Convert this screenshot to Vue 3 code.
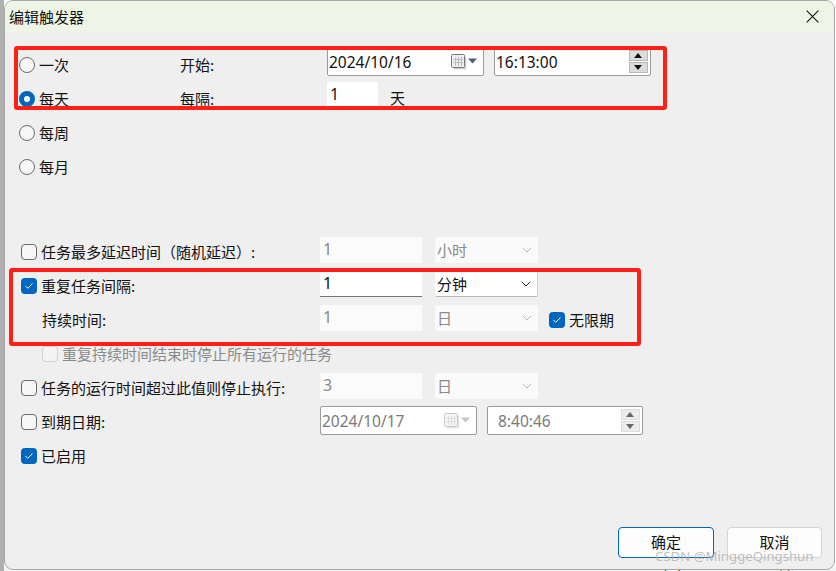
<script setup>
const freq = [
  { label: '一次', on: false },
  { label: '每天', on: true },
  { label: '每周', on: false },
  { label: '每月', on: false },
]
</script>

<template>
  <div class="screen">
    <div class="behind">
      <span class="behind-a">确定</span>
      <span class="behind-b">取消</span>
    </div>
    <div class="dialog">
      <header class="title">
        <span>编辑触发器</span>
        <svg class="close" width="13" height="13" viewBox="0 0 13 13"><path d="M.7.7L12.3 12.3M12.3.7L.7 12.3" stroke="#111" stroke-width="1.1" fill="none" /></svg>
      </header>

      <section class="top">
        <div class="row" v-for="(f, i) in freq" :key="f.label">
          <span class="radio" :class="{ on: f.on }"></span>
          <span class="freq-label">{{ f.label }}</span>

          <template v-if="i === 0">
            <span class="mid-label">开始:</span>
            <div class="box date">
              <span>2024/10/16</span>
              <svg class="cal" width="26" height="17" viewBox="0 0 26 17">
                <path d="M3 15.5h11.5V4" stroke="#c9c9c9" stroke-width="1.5" fill="none" />
                <rect x=".5" y="1.5" width="13" height="13" rx="1" fill="#eeeef0" stroke="#77777c" />
                <path d="M4.5 4v9M7.5 4v9M10.5 4v9M2.5 6.5h9.500M2.500 9.500h9.500" stroke="#bcbcc4" fill="none" />
                <path d="M17 5.500h9l-4.500 5z" fill="#4f5c80" />
              </svg>
            </div>
            <div class="box time">
              <span>16:13:00</span>
              <div class="spin">
                <span class="up"></span>
                <span class="down"></span>
              </div>
            </div>
          </template>

          <template v-if="i === 1">
            <span class="mid-label">每隔:</span>
            <div class="every">1</div>
            <span class="unit">天</span>
          </template>
        </div>
      </section>

      <section class="bottom">
        <div class="row">
          <span class="check"></span>
          <span class="opt-label">任务最多延迟时间（随机延迟）:</span>
          <div class="num off">1</div>
          <div class="pick off">小时<svg width="10" height="6" viewBox="0 0 10 6"><path d="M.8.8L5 5l4.200-4.200" stroke="#b5b5b5" fill="none" /></svg></div>
        </div>
        <div class="row">
          <span class="check on"><svg width="10" height="8" viewBox="0 0 10 8"><path d="M1.500 4l2.300 2.300L8.500 1.500" stroke="#fff" fill="none" /></svg></span>
          <span class="opt-label">重复任务间隔:</span>
          <div class="num active">1</div>
          <div class="pick active">分钟<svg width="10" height="6" viewBox="0 0 10 6"><path d="M.8.8L5 5l4.200-4.200" stroke="#333" fill="none" /></svg></div>
        </div>
        <div class="row">
          <span class="check ghost"></span>
          <span class="opt-label indent">持续时间:</span>
          <div class="num off">1</div>
          <div class="pick off">日<svg width="10" height="6" viewBox="0 0 10 6"><path d="M.8.8L5 5l4.200-4.200" stroke="#b5b5b5" fill="none" /></svg></div>
          <span class="check on forever"><svg width="10" height="8" viewBox="0 0 10 8"><path d="M1.500 4l2.300 2.300L8.500 1.500" stroke="#fff" fill="none" /></svg></span>
          <span class="forever-label">无限期</span>
        </div>
        <div class="row sub">
          <span class="check disabled"></span>
          <span class="sub-label">重复持续时间结束时停止所有运行的任务</span>
        </div>
        <div class="row">
          <span class="check"></span>
          <span class="opt-label">任务的运行时间超过此值则停止执行:</span>
          <div class="num off">3</div>
          <div class="pick off">日<svg width="10" height="6" viewBox="0 0 10 6"><path d="M.8.8L5 5l4.200-4.200" stroke="#b5b5b5" fill="none" /></svg></div>
        </div>
        <div class="row">
          <span class="check"></span>
          <span class="opt-label narrow">到期日期:</span>
          <div class="box date low off-box">
            <span>2024/10/17</span>
            <svg class="cal" width="26" height="17" viewBox="0 0 26 17">
              <path d="M3 15.500h11.500V4" stroke="#e2e2e2" stroke-width="1.500" fill="none" />
              <rect x=".5" y="1.500" width="13" height="13" rx="1" fill="#f4f4f4" stroke="#c8c8c8" />
              <path d="M4.500 4v9M7.500 4v9M10.500 4v9M2.500 6.500h9.500M2.500 9.500h9.500" stroke="#dedede" fill="none" />
              <path d="M17 5.500h9l-4.500 5z" fill="#c4c4c4" />
            </svg>
          </div>
          <div class="box time low off-box">
            <span class="pad">8:40:46</span>
            <div class="spin">
              <span class="up"></span>
              <span class="down"></span>
            </div>
          </div>
        </div>
        <div class="row">
          <span class="check on"><svg width="10" height="8" viewBox="0 0 10 8"><path d="M1.500 4l2.300 2.300L8.500 1.500" stroke="#fff" fill="none" /></svg></span>
          <span class="opt-label">已启用</span>
        </div>
      </section>

      <footer class="foot">
        <button class="btn primary"><span>确定</span></button>
        <button class="btn second"><span>取消</span></button>
      </footer>
    </div>

    <div class="mark mark-a"></div>
    <div class="mark mark-b"></div>
    <div class="water">CSDN @MinggeQingshun</div>
  </div>
</template>

<style>
html, body { margin: 0; padding: 0; background: #fff; }
</style>

<style scoped>
.screen {
  position: relative;
  width: 836px;
  height: 571px;
  overflow: hidden;
  box-sizing: border-box;
  padding: 0 1px 1px 4px;
  background: linear-gradient(90deg, #b0b0b0 0 4px, #fff 4px);
  font-family: "Noto Sans CJK SC", "Noto Sans", sans-serif;
  font-size: 15px;
  color: #111;
}
.behind {
  position: absolute;
  left: 4px;
  right: 0;
  top: 567px;
  height: 4px;
  background: #f4f4f4;
  line-height: 20px;
  overflow: hidden;
}
.behind span {
  position: absolute;
  top: 0;
}
.behind-a { left: 653px; }
.behind-b { left: 760px; }
.dialog {
  position: relative;
  box-sizing: border-box;
  height: 100%;
  display: flex;
  flex-direction: column;
  background: #efefef;
  border: 1px solid #a6a6a6;
  border-radius: 9px;
  overflow: hidden;
}
.title {
  height: 31px;
  flex: none;
  display: flex;
  align-items: center;
  justify-content: space-between;
  padding: 0 15px 0 4px;
  background: #eef5e7;
  line-height: 30px;
}
.close { margin-top: -1px; }
.top { padding: 16px 0 0 14px; }
.bottom { margin-top: 51px; padding-left: 16px; }
.row {
  height: 34px;
  display: flex;
  align-items: flex-start;
  line-height: 34px;
}
.radio {
  flex: none;
  box-sizing: border-box;
  width: 16px;
  height: 16px;
  margin: 9px 4px 0 0;
  border: 1px solid #6b6b6b;
  border-radius: 50%;
  background: #f6f6f6;
}
.radio.on {
  border: 5px solid #0067c0;
  background: #fff;
}
.freq-label { width: 141px; flex: none; }
.mid-label { width: 147px; flex: none; }
.box {
  flex: none;
  box-sizing: border-box;
  display: flex;
  align-items: center;
  justify-content: space-between;
  height: 29px;
  margin-top: -1px;
  padding: 0 1px;
  background: #fff;
  border: 1px solid #9b9b9b;
  border-radius: 2px;
  font-family: "Noto Sans", sans-serif;
  font-size: 15.5px;
  line-height: 26px;
}
.date { width: 157px; margin-right: 10px; }
.date .cal { margin-right: 5px; }
.time { width: 157px; padding-right: 2px; }
.low { margin-top: 1px; }
.off-box { color: #7a7a7a; }
.off-box.time { width: 156px; }
.pad { padding-left: 9px; }
.narrow { width: 278px; }
.spin {
  width: 19px;
  display: flex;
  flex-direction: column;
  gap: 1px;
}
.spin span {
  position: relative;
  height: 11px;
  background: #dcdcdc;
  border: 1px solid #b8b8b8;
  box-sizing: border-box;
}
.spin .up::after, .spin .down::after {
  content: "";
  position: absolute;
  left: 4px;
  top: 2px;
  border-left: 4px solid transparent;
  border-right: 4px solid transparent;
}
.spin .up::after { border-bottom: 5px solid #111; }
.spin .down::after { border-top: 5px solid #111; }
.off-box .spin span { background: #ececec; border-color: #dedede; }
.off-box .spin .up::after { border-bottom-color: #666; }
.off-box .spin .down::after { border-top-color: #666; }
.every {
  width: 51px;
  height: 26px;
  box-sizing: border-box;
  padding-left: 3px;
  background: #fff;
  font-family: "Noto Sans", sans-serif;
  font-size: 16px;
  line-height: 25px;
  flex: none;
}
.unit { margin: -1px 0 0 12px; }
.check {
  flex: none;
  box-sizing: border-box;
  width: 16px;
  height: 16px;
  margin: 9px 4px 0 0;
  display: flex;
  align-items: center;
  justify-content: center;
  border: 1px solid #6b6b6b;
  border-radius: 4px;
  background: #f6f6f6;
}
.check.on { border: 0; background: #0067c0; }
.check.ghost { visibility: hidden; }
.check.disabled { margin-left: 21px; border-color: #d0d0d0; background: #f4f4f4; }
.opt-label { width: 279px; flex: none; }
.indent { padding-left: 1px; box-sizing: border-box; }
.sub-label { color: #8a8a8a; }
.num {
  flex: none;
  box-sizing: border-box;
  width: 102px;
  height: 26px;
  margin: 2px 13px 0 0;
  padding-left: 3px;
  font-family: "Noto Sans", sans-serif;
  font-size: 16px;
  line-height: 24px;
}
.num.off { background: #fbfbfb; color: #8a8a8a; }
.num.active { background: #fff; color: #111; border-bottom: 1px solid #777; }
.pick {
  flex: none;
  box-sizing: border-box;
  width: 103px;
  height: 26px;
  margin-top: 2px;
  padding: 0 6px 0 2px;
  display: flex;
  align-items: center;
  justify-content: space-between;
  border-radius: 2px;
  line-height: 24px;
}
.pick.off { background: #fafafa; color: #8a8a8a; }
.pick.active { background: #fff; color: #111; border-bottom: 1px solid #b8b8b8; border-right: 1px solid #cfcfcf; }
.forever { margin: 9px 4px 0 11px; }
.forever-label { line-height: 34px; }
.foot {
  margin-top: auto;
  padding: 0 12px 11px 0;
  display: flex;
  justify-content: flex-end;
  gap: 13px;
}
.btn {
  width: 96px;
  height: 31px;
  box-sizing: border-box;
  padding: 0 0 3px;
  background: #fdfdfd;
  border: 1px solid #d4d4d4;
  border-radius: 4px;
  font: inherit;
  color: #111;
}
.btn.primary { border: 1px solid #0067c0; }
.btn.second { width: 95px; }
.mark {
  position: absolute;
  box-sizing: border-box;
  border: 4px solid #ff2015;
  border-radius: 3px;
  pointer-events: none;
}
.mark-a { left: 14px; top: 46px; width: 653px; height: 64px; }
.mark-b { left: 9px; top: 268px; width: 632px; height: 78px; }
.water {
  position: absolute;
  left: 655px;
  top: 546px;
  font-family: "Noto Sans", sans-serif;
  font-size: 13.2px;
  line-height: 20px;
  color: rgba(175, 175, 175, 0.8);
  white-space: nowrap;
}
</style>
